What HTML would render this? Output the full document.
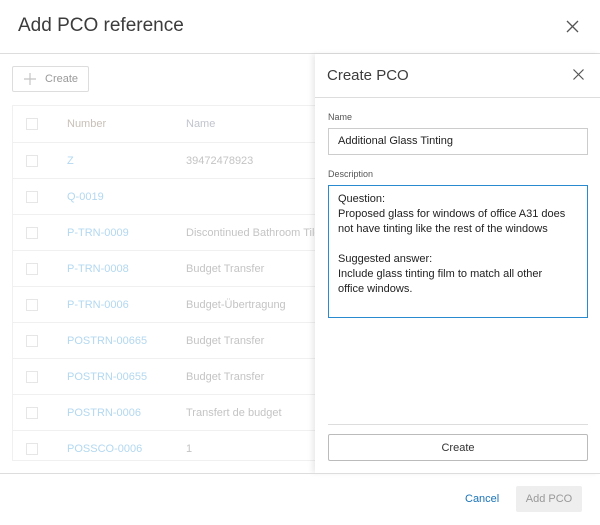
<!DOCTYPE html>
<html><head><style>
*{box-sizing:border-box;margin:0;padding:0}
body{width:600px;height:525px;background:#fff;font-family:"Liberation Sans",sans-serif;position:relative;overflow:hidden;color:#3c3c3c}
.a{position:absolute}
.cb{position:absolute;left:14px;width:12px;height:12px;border:1px solid #e6e6e6;background:#fff}
.row{position:absolute;left:12px;width:305px;height:36px;border-top:1px solid #f0f0f0;font-size:11px}
.num{position:absolute;left:55px;top:12px;color:#b3d8f0}
.nm{position:absolute;left:174px;top:12px;color:#c4c4c4;white-space:nowrap}
</style></head><body>
<div class="a" style="left:18px;top:15px;font-size:19px;color:#3c3c3c">Add PCO reference</div>
<svg class="a" style="left:566px;top:20px" width="13" height="13" viewBox="0 0 13 13"><path d="M1 1L12 12M12 1L1 12" stroke="#555" stroke-width="1.3"/></svg>
<div class="a" style="left:0;top:53px;width:600px;border-top:1px solid #ddd"></div>
<div class="a" style="left:12px;top:66px;width:77px;height:26px;border:1px solid #ddd;border-radius:2px;font-size:11px;color:#9a9a9a;padding:6px 0 0 32px">Create</div>
<svg class="a" style="left:24px;top:73px" width="12" height="12"><path d="M6 0V12M0 6H12" stroke="#c4c4c4" stroke-width="1.2"/></svg>
<div class="a" style="left:12px;top:105px;width:310px;height:356px;border:1px solid #f0f0f0"></div>
<div class="row" style="top:105px;border-top:none"><div class="cb" style="top:13px"></div><div class="num" style="color:#c8c0b8;top:13px">Number</div><div class="nm" style="top:13px;color:#c0c4cc">Name</div></div>
<div class="row" style="top:142px"><div class="cb" style="top:12px"></div><div class="num">Z</div><div class="nm">39472478923</div></div>
<div class="row" style="top:178px"><div class="cb" style="top:12px"></div><div class="num">Q-0019</div><div class="nm"></div></div>
<div class="row" style="top:214px"><div class="cb" style="top:12px"></div><div class="num">P-TRN-0009</div><div class="nm">Discontinued Bathroom Tile</div></div>
<div class="row" style="top:250px"><div class="cb" style="top:12px"></div><div class="num">P-TRN-0008</div><div class="nm">Budget Transfer</div></div>
<div class="row" style="top:286px"><div class="cb" style="top:12px"></div><div class="num">P-TRN-0006</div><div class="nm">Budget-Übertragung</div></div>
<div class="row" style="top:322px"><div class="cb" style="top:12px"></div><div class="num">POSTRN-00665</div><div class="nm">Budget Transfer</div></div>
<div class="row" style="top:358px"><div class="cb" style="top:12px"></div><div class="num">POSTRN-00655</div><div class="nm">Budget Transfer</div></div>
<div class="row" style="top:394px"><div class="cb" style="top:12px"></div><div class="num">POSTRN-0006</div><div class="nm">Transfert de budget</div></div>
<div class="row" style="top:430px"><div class="cb" style="top:12px"></div><div class="num">POSSCO-0006</div><div class="nm">1</div></div>
<div class="a" style="left:315px;top:54px;width:285px;height:419px;background:#fff;box-shadow:-3px 0 5px rgba(0,0,0,0.08)">
<div class="a" style="left:12px;top:13px;font-size:15px;color:#3c3c3c">Create PCO</div>
<svg class="a" style="left:258px;top:15px" width="11" height="11"><path d="M0.5 0.5L10.5 10.5M10.5 0.5L0.5 10.5" stroke="#555" stroke-width="1.2"/></svg>
<div class="a" style="left:0;top:43px;width:285px;border-top:1px solid #ddd"></div>
<div class="a" style="left:13px;top:58px;font-size:9px;color:#555">Name</div>
<div class="a" style="left:13px;top:74px;width:260px;height:27px;border:1px solid #ccc;font-size:11px;color:#222;padding:6px 0 0 9px">Additional Glass Tinting</div>
<div class="a" style="left:13px;top:115px;font-size:9px;color:#555">Description</div>
<div class="a" style="left:13px;top:131px;width:260px;height:133px;border:1px solid #2a8ad0;font-size:11px;color:#222;padding:6px 12px 0 9px;line-height:15px">Question:<br>Proposed glass for windows of office A31 does<br>not have tinting like the rest of the windows<br><br>Suggested answer:<br>Include glass tinting film to match all other<br>office windows.</div>
<div class="a" style="left:13px;top:370px;width:260px;border-top:1px solid #ddd"></div>
<div class="a" style="left:13px;top:380px;width:260px;height:27px;border:1px solid #bbb;border-radius:2px;font-size:11px;color:#333;text-align:center;padding-top:7px">Create</div>
</div>
<div class="a" style="left:0;top:473px;width:600px;border-top:1px solid #ddd"></div>
<div class="a" style="left:465px;top:493px;font-size:11px;color:#1a74b8">Cancel</div>
<div class="a" style="left:516px;top:486px;width:66px;height:26px;background:#eee;border-radius:2px;font-size:11px;color:#999;text-align:center;padding-top:7px">Add PCO</div>
</body></html>
